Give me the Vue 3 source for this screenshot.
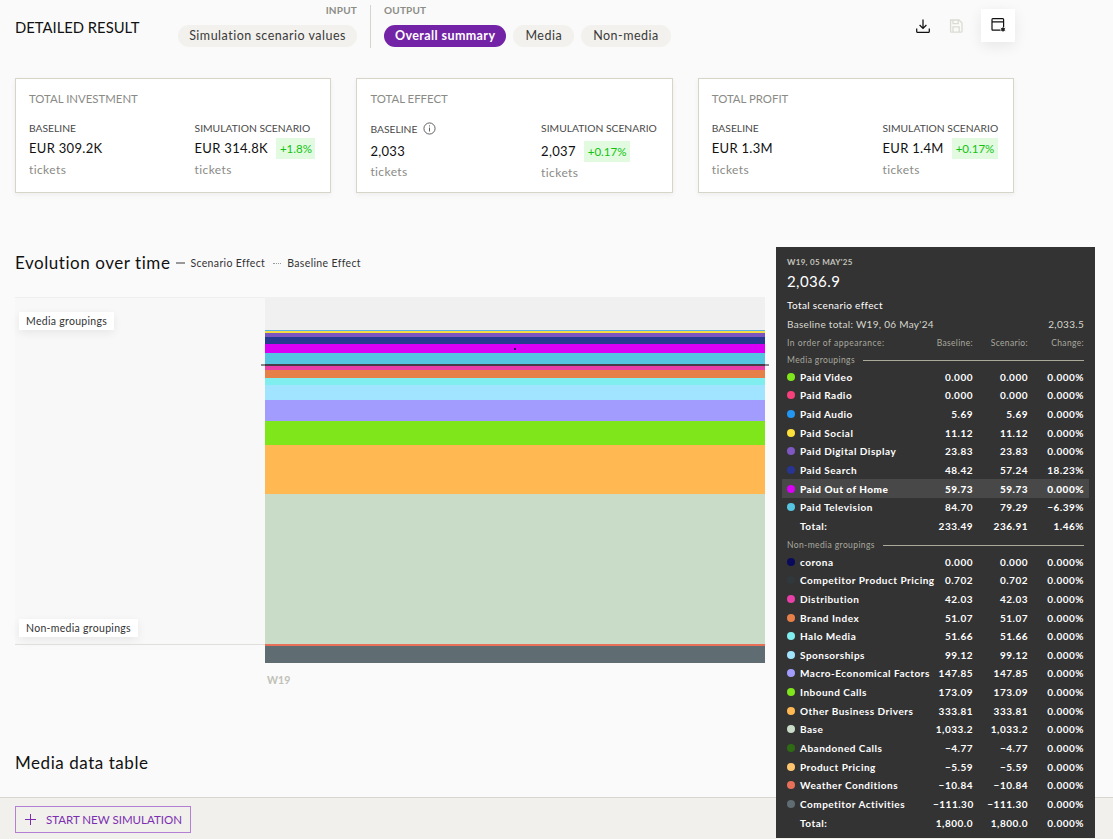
<script setup>
const cards = [
  { title: 'TOTAL INVESTMENT', base: 'EUR 309.2K', sim: 'EUR 314.8K', delta: '+1.8%', info: false },
  { title: 'TOTAL EFFECT', base: '2,033', sim: '2,037', delta: '+0.17%', info: true },
  { title: 'TOTAL PROFIT', base: 'EUR 1.3M', sim: 'EUR 1.4M', delta: '+0.17%', info: false }
]
const bands = [
  ['#f0f0f0', 33], ['#5ab4e6', 1], ['#f5dc46', 2], ['#7b55c0', 3.5], ['#3a3a8a', 0.5], ['#263a90', 7], ['#d900f5', 9],
  ['#55c5e2', 11], ['#5a3a50', 2], ['#e840a8', 4], ['#e68048', 8], ['#80eeee', 7], ['#a0e4ff', 15], ['#a39cff', 21],
  ['#80e61c', 24], ['#ffb852', 49], ['#c9dcc8', 150], ['#e87058', 2], ['#5f6c72', 17]
]
const media = [
  ['#80e61c', 'Paid Video', '0.000', '0.000', '0.000%'],
  ['#f5407c', 'Paid Radio', '0.000', '0.000', '0.000%'],
  ['#2296f3', 'Paid Audio', '5.69', '5.69', '0.000%'],
  ['#fde03a', 'Paid Social', '11.12', '11.12', '0.000%'],
  ['#7e57c2', 'Paid Digital Display', '23.83', '23.83', '0.000%'],
  ['#283593', 'Paid Search', '48.42', '57.24', '18.23%'],
  ['#d900f5', 'Paid Out of Home', '59.73', '59.73', '0.000%', true],
  ['#55c5e2', 'Paid Television', '84.70', '79.29', '−6.39%'],
  ['', 'Total:', '233.49', '236.91', '1.46%']
]
const other = [
  ['#0a0a5c', 'corona', '0.000', '0.000', '0.000%'],
  ['#30383c', 'Competitor Product Pricing', '0.702', '0.702', '0.000%'],
  ['#e840a8', 'Distribution', '42.03', '42.03', '0.000%'],
  ['#e68048', 'Brand Index', '51.07', '51.07', '0.000%'],
  ['#80eeee', 'Halo Media', '51.66', '51.66', '0.000%'],
  ['#a0e4ff', 'Sponsorships', '99.12', '99.12', '0.000%'],
  ['#a39cff', 'Macro-Economical Factors', '147.85', '147.85', '0.000%'],
  ['#80e61c', 'Inbound Calls', '173.09', '173.09', '0.000%'],
  ['#ffb852', 'Other Business Drivers', '333.81', '333.81', '0.000%'],
  ['#c9dcc8', 'Base', '1,033.2', '1,033.2', '0.000%'],
  ['#2e6b14', 'Abandoned Calls', '−4.77', '−4.77', '0.000%'],
  ['#ffc56e', 'Product Pricing', '−5.59', '−5.59', '0.000%'],
  ['#e87058', 'Weather Conditions', '−10.84', '−10.84', '0.000%'],
  ['#5f6c72', 'Competitor Activities', '−111.30', '−111.30', '0.000%'],
  ['', 'Total:', '1,800.0', '1,800.0', '0.000%']
]
</script>

<template>
  <div class="page">
    <header class="top">
      <h1 class="title">DETAILED RESULT</h1>
      <div class="group group-input">
        <div class="cap">INPUT</div>
        <div class="pills"><span class="pill">Simulation scenario values</span></div>
      </div>
      <div class="divider"></div>
      <div class="group">
        <div class="cap">OUTPUT</div>
        <div class="pills">
          <span class="pill active">Overall summary</span>
          <span class="pill wide">Media</span>
          <span class="pill wide">Non-media</span>
        </div>
      </div>
      <div class="tools">
        <svg class="tool" viewBox="0 0 14 14" fill="none" stroke="#111" stroke-width="1.25">
          <path d="M7 .5v8.8M3.6 6 7 9.4 10.4 6M.7 9.5v3q0 .9.9.9h10.8q.9 0 .9-.9v-3" />
        </svg>
        <svg class="tool" viewBox="0 0 14 14" fill="none" stroke="#dcdbd3" stroke-width="1.3">
          <path d="M1.6 1h8.4l3 3v8.2q0 .9-.9.9H2.5q-.9 0-.9-.9zM4 1v3.6h5.2V1M4 13V7.8h6.2V13" />
        </svg>
        <div class="tool-box">
          <svg class="tool" viewBox="0 0 15 14" fill="none" stroke="#111" stroke-width="1.2">
            <path d="M9.5 12.2H1.9q-.9 0-.9-.9V1.5q0-.9.9-.9h9.8q.9 0 .9.9v7.7M1 3.9h11.6" />
            <circle cx="12" cy="11.4" r="1.7" fill="#222" stroke="none" />
            <path d="M12 8.9v5M9.8 10.1l4.4 2.6M14.2 10.1l-4.4 2.6" stroke="#222" stroke-width=".8" />
          </svg>
        </div>
      </div>
    </header>

    <section class="cards">
      <article v-for="c in cards" :key="c.title" class="card" :class="{ 'has-info': c.info }">
        <div class="card-title">{{ c.title }}</div>
        <div class="card-cols">
          <div class="col col-base">
            <div class="label">BASELINE
              <svg v-if="c.info" class="info" viewBox="0 0 14 14" fill="none" stroke="#555" stroke-width="1">
                <circle cx="7" cy="7" r="6" /><path d="M7 6v4.2M7 3.6v1.2" />
              </svg>
            </div>
            <div class="value">{{ c.base }}</div>
            <div class="unit">tickets</div>
          </div>
          <div class="col col-sim">
            <div class="label">SIMULATION SCENARIO</div>
            <div class="value-line">
              <span class="value">{{ c.sim }}</span>
              <span class="delta">{{ c.delta }}</span>
            </div>
            <div class="unit">tickets</div>
          </div>
        </div>
      </article>
    </section>

    <div class="evo-head">
      <h2 class="h2">Evolution over time</h2>
      <span class="legend"><i class="dash"></i>Scenario Effect</span>
      <span class="legend"><i class="dots"></i>Baseline Effect</span>
    </div>

    <section class="chart">
      <div class="chart-left">
        <span class="tag tag-media">Media groupings</span>
        <span class="tag tag-non">Non-media groupings</span>
      </div>
      <div class="plot">
        <div v-for="(b, i) in bands" :key="i" :style="{ background: b[0], height: b[1] + 'px' }"></div>
        <i class="marker"></i>
      </div>
      <i class="cross"></i>
      <i class="axis"></i>
    </section>
    <div class="week">W19</div>

    <h2 class="h2 table-title">Media data table</h2>

    <footer class="bottom">
      <button class="start">
        <svg viewBox="0 0 11 11" fill="none" stroke="#7b2fb0" stroke-width="1"><path d="M5.5 0v11M0 5.5h11" /></svg>
        START NEW SIMULATION
      </button>
    </footer>

    <aside class="tip">
      <div class="tip-date">W19, 05 MAY'25</div>
      <div class="tip-big">2,036.9</div>
      <div class="tip-sub">Total scenario effect</div>
      <div class="tip-base"><span>Baseline total: W19, 06 May'24</span><span>2,033.5</span></div>
      <div class="row head">
        <span class="name">In order of appearance:</span><span>Baseline:</span><span>Scenario:</span><span>Change:</span>
      </div>
      <div class="sect">Media groupings<i></i></div>
      <div v-for="r in media" :key="r[1]" class="row" :class="{ hot: r[5] }">
        <i class="dot" :style="{ background: r[0] }"></i>
        <span class="name">{{ r[1] }}</span><span>{{ r[2] }}</span><span>{{ r[3] }}</span><span>{{ r[4] }}</span>
      </div>
      <div class="sect sect-tight">Non-media groupings<i></i></div>
      <div v-for="r in other" :key="r[1]" class="row">
        <i class="dot" :style="{ background: r[0] }"></i>
        <span class="name">{{ r[1] }}</span><span>{{ r[2] }}</span><span>{{ r[3] }}</span><span>{{ r[4] }}</span>
      </div>
    </aside>
  </div>
</template>

<style>
html, body { margin: 0; background: #fafafa; }
</style>

<style scoped>
.page {
  position: relative;
  width: 1113px;
  height: 839px;
  overflow: hidden;
  background: #fafafa;
  color: #111;
  font-family: Lato, "Open Sans", sans-serif;
}
.top { display: flex; align-items: flex-start; height: 48px; padding: 5px 0 0 15px; box-sizing: border-box; }
.title { width: 164px; margin: 12px 0 0; font-size: 14.8px; font-weight: 400; line-height: 20px; white-space: nowrap; }
.group { display: flex; flex-direction: column; }
.group-input { width: 178px; align-items: flex-end; }
.cap { font-size: 10px; font-weight: 700; color: #8c8c86; line-height: 10px; letter-spacing: .2px; }
.pills { display: flex; gap: 7px; margin-top: 10px; }
.pill {
  height: 22px; padding: 0 11px; border-radius: 11px; background: #f2f1ed;
  font-size: 12.5px; line-height: 22px; letter-spacing: .5px; color: #3a3a3a; white-space: nowrap;
}
.pill.wide { padding: 0 12px; }
.pill.active { background: #7324a6; color: #fff; font-weight: 700; letter-spacing: .4px; }
.divider { width: 1px; height: 43px; margin: 0 13px; background: #d6d5cd; }
.tools { display: flex; align-items: flex-start; gap: 18.5px; margin-left: auto; margin-right: 98px; margin-top: 4px; }
.tool { width: 14px; height: 14px; display: block; }
.tools > .tool { margin-top: 10px; }
.tool-box { width: 34px; height: 33px; padding: 9px 0 0 10px; box-sizing: border-box; background: #fff; box-shadow: 0 4px 14px rgba(0,0,0,.08); }
.tool-box .tool { width: 15px; }
.cards { display: flex; gap: 25px; padding: 30px 0 0 15px; }
.card {
  width: 316.4px; height: 115px; box-sizing: border-box; padding: 13px 15px 0 13px;
  background: #fff; border: 1px solid #d6d5c8; box-shadow: 0 2px 5px rgba(0,0,0,.05);
}
.card-title { font-size: 11.4px; color: #8a8a86; line-height: 14px; }
.card-cols { display: flex; justify-content: space-between; margin-top: 16px; }
.label { font-size: 10.3px; line-height: 12px; color: #4a4a4a; display: flex; align-items: center; gap: 6px; white-space: nowrap; }
.value { font-size: 13px; letter-spacing: .3px; line-height: 21px; margin-top: 4px; white-space: nowrap; }
.value-line { display: flex; gap: 8.5px; height: 21px; margin-top: 4px; align-items: center; }
.value-line .value { margin: 0; }
.delta { font-size: 11.5px; line-height: 21px; padding: 0 3.5px; background: #e2fbe0; color: #12c212; }
.unit { font-size: 12px; line-height: 16px; color: #8a8a86; margin-top: 3px; letter-spacing: .4px; }
.has-info .col-base .value { margin-top: 6px; }
.has-info .col-base .unit { margin-top: 2px; }
.has-info .col-sim .value-line { margin-top: 7px; }
.info { width: 13px; height: 13px; }
.evo-head { display: flex; align-items: center; margin: 58px 0 0 15px; height: 24px; }
.h2 { margin: 0; font-size: 17px; font-weight: 400; letter-spacing: .55px; line-height: 24px; }
.legend { display: inline-flex; align-items: center; font-size: 10.5px; color: #333; letter-spacing: .35px; margin-left: 8px; white-space: nowrap; }
.evo-head .h2 { margin-right: -2px; }
.dash { width: 9px; height: 1.5px; background: #999; margin-right: 5px; }
.dots { width: 8px; border-top: 1.5px dotted #999; margin-right: 6px; }
.chart { position: relative; display: flex; margin: 22px 0 0 15px; width: 750px; height: 366px; }
.chart-left { position: relative; width: 250px; height: 347px; background: #f8f8f8; border-top: 1px solid #eee; box-sizing: border-box; }
.plot { position: relative; flex: 1; display: flex; flex-direction: column; }
.tag {
  position: absolute; left: 4px; height: 18px; padding: 0 7px; background: #fff; font-size: 10.5px; line-height: 18px; letter-spacing: .3px;
  color: #333; box-shadow: 0 3px 10px rgba(0,0,0,.07); white-space: nowrap;
}
.tag-media { top: 14px; }
.tag-non { top: 321px; }
.marker { position: absolute; left: 249px; top: 51px; width: 2px; height: 2px; background: #30006a; }
.cross { position: absolute; left: 246px; right: -4px; top: 67px; height: 2px; background: rgba(60,60,70,.6); }
.axis { position: absolute; left: 0; width: 250px; top: 347px; height: 1px; background: #dfdfdc; box-shadow: 0 2px 8px rgba(0,0,0,.05); }
.week { margin: 10px 0 0 267px; font-size: 10.5px; font-weight: 700; line-height: 14px; color: #c0c0b8; }
.table-title { margin: 64px 0 0 15px; }
.bottom {
  position: absolute; left: 0; right: 0; bottom: 0; height: 42px; box-sizing: border-box; padding: 8px 0 0 15px;
  background: #f1f0ec; border-top: 1px solid #d8d7cf;
}
.start {
  display: flex; align-items: center; gap: 10px; height: 27px; width: 176px; padding: 0 0 0 9px; box-sizing: border-box;
  background: transparent; border: 1px solid #b27fd4; font: inherit; font-size: 11.5px; color: #7b2fb0; white-space: nowrap;
}
.start svg { width: 11px; height: 11px; flex: none; }
.tip {
  position: absolute; left: 776px; top: 247px; width: 319px; height: 591px; box-sizing: border-box; padding: 9px 11px 0;
  background: #333; color: #fff;
}
.tip-date { font-size: 8px; font-weight: 700; line-height: 12px; color: #c4c4bc; letter-spacing: .3px; white-space: nowrap; }
.tip-big { font-size: 15px; font-weight: 400; line-height: 22px; margin-top: 2px; letter-spacing: .4px; }
.tip-sub { font-size: 10px; line-height: 14px; margin-top: 6px; letter-spacing: .35px; }
.tip-base { display: flex; justify-content: space-between; font-size: 10px; line-height: 14px; margin-top: 5px; color: #d8d8d0; letter-spacing: .3px; }
.row { display: grid; grid-template-columns: 13px 133px 40px 55px 56px; position: relative; align-items: center; height: 18.65px; font-size: 10px; font-weight: 700; letter-spacing: .5px; white-space: nowrap; }
.row > span { text-align: right; }
.row > .name { text-align: left; }
.row .dot { width: 8px; height: 8px; border-radius: 50%; }
.row.head { grid-template-columns: 146px 40px 55px 56px; height: 14px; margin-top: 5px; font-size: 8.5px; font-weight: 400; color: #a8a89e; letter-spacing: .5px; }
.row.head > span:not(.name) { letter-spacing: .35px; }
.row.hot { font-weight: 900; }
.row.hot::before { content: ""; position: absolute; inset: 0 -5px; background: #484848; z-index: 0; }
.row > * { position: relative; z-index: 1; }
.sect { display: flex; align-items: center; gap: 8px; height: 13px; margin: 3.5px 0 1px; font-size: 8.5px; color: #a8a89e; letter-spacing: .4px; white-space: nowrap; }
.sect-tight { margin-bottom: .5px; }
.sect i { flex: 1; height: 1px; background: #aaa99a; }
</style>
